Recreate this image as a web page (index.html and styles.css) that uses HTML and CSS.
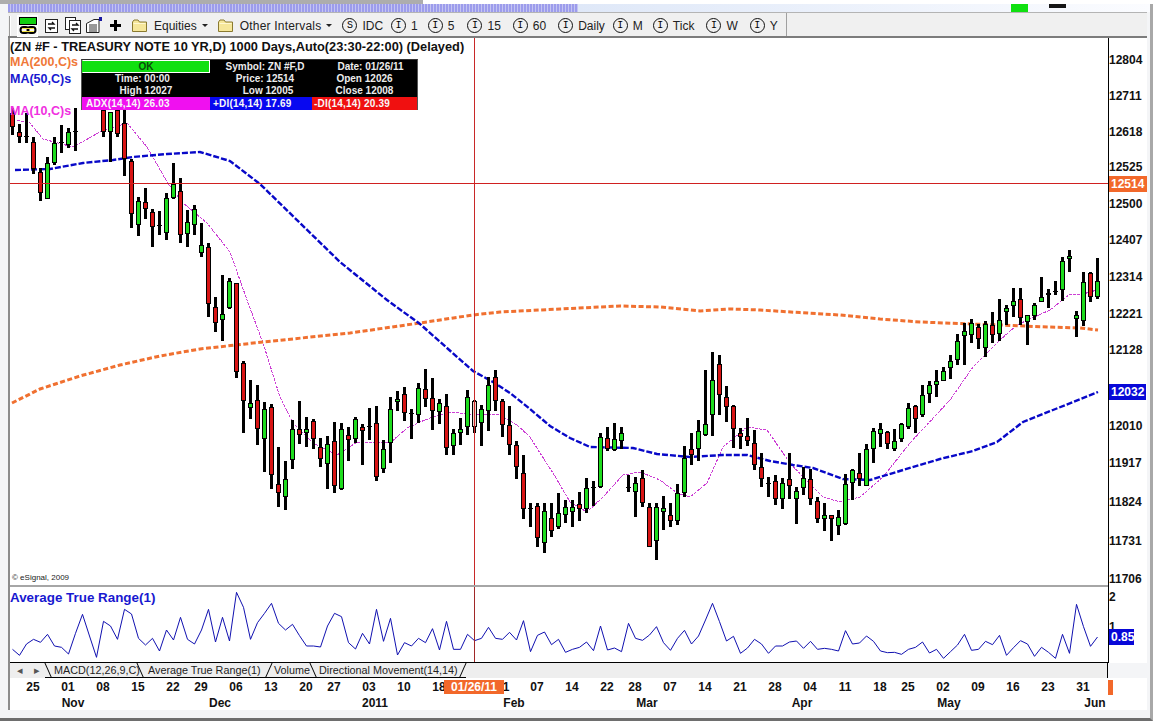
FILE: index.html
```html
<!DOCTYPE html>
<html lang="en">
<head>
<meta charset="utf-8">
<title>ZN #F chart</title>
<link rel="stylesheet" href="styles.css">
<script src="script.js" defer></script>
</head>
<body>
<div class="strip"><div class="strip-gray"></div></div>
<div class="window">
  <div class="titlebar">
    <div class="stripes"></div>
    <div class="led-green"></div>
    <div class="led-black"></div>
  </div>
  <div class="toolbar">
    <div class="grip"></div>
    <div class="btn-pressed">
      <svg class="ico-link" viewBox="0 0 18 18"><rect x="0.5" y="0.5" width="17" height="7" fill="#10d010" stroke="#000"/><rect x="1.5" y="10" width="8" height="6" rx="3" fill="none" stroke="#000" stroke-width="2"/><rect x="8.5" y="10" width="8" height="6" rx="3" fill="none" stroke="#000" stroke-width="2"/><rect x="3" y="11" width="12" height="1" fill="#f0e040"/><rect x="3" y="14" width="12" height="1" fill="#f0e040"/></svg>
    </div>
    <svg class="ico ico-a" viewBox="0 0 13 16"><rect x="0.5" y="1.5" width="12" height="13" fill="#fff" stroke="#222"/><path d="M3 6h6l-2-2M10 10H4l2 2" fill="none" stroke="#111" stroke-width="1.3"/></svg>
    <svg class="ico ico-b" viewBox="0 0 16 17"><rect x="0.5" y="0.5" width="10" height="12" fill="#fff" stroke="#222"/><rect x="4.5" y="3.5" width="11" height="13" fill="#fff" stroke="#222"/><path d="M7 8h6l-2-2M13 12H7l2 2" fill="none" stroke="#111" stroke-width="1.3"/></svg>
    <svg class="ico ico-c" viewBox="0 0 17 17"><path d="M0.5 6.5L8 2.5H13V15.5H0.5Z" fill="#fff" stroke="#222"/><path d="M3 8h8M3 10h8M3 12h8M3 14h8" stroke="#333"/><rect x="13" y="0" width="3" height="4" fill="#1818a0"/></svg>
    <svg class="ico ico-plus" viewBox="0 0 11 11"><path d="M5.5 0V11M0 5.5H11" stroke="#000" stroke-width="3"/></svg>
    <div class="tool menu">
      <svg class="folder" viewBox="0 0 15 13"><path d="M0.5 3L2 1H6L7.5 3H14.5V12.5H0.5Z" fill="#f6e79a" stroke="#8a7a30"/><path d="M1.5 4.5H13.5" stroke="#fff8d0"/></svg>
      <span class="label">Equities</span><span class="caret"></span>
    </div>
    <div class="tool menu menu-last">
      <svg class="folder" viewBox="0 0 15 13"><path d="M0.5 3L2 1H6L7.5 3H14.5V12.5H0.5Z" fill="#f6e79a" stroke="#8a7a30"/><path d="M1.5 4.5H13.5" stroke="#fff8d0"/></svg>
      <span class="label label-wide">Other Intervals</span><span class="caret"></span>
    </div>
    <div class="tool tool-tight"><span class="round">S</span><span class="label">IDC</span></div>
    <div class="tool"><span class="round">I</span><span class="label">1</span></div>
    <div class="tool tool-wider"><span class="round">I</span><span class="label">5</span></div>
    <div class="tool tool-wide"><span class="round">I</span><span class="label">15</span></div>
    <div class="tool tool-wide"><span class="round">I</span><span class="label">60</span></div>
    <div class="tool tool-tight"><span class="round">I</span><span class="label">Daily</span></div>
    <div class="tool"><span class="round">I</span><span class="label">M</span></div>
    <div class="tool tool-wide"><span class="round">I</span><span class="label">Tick</span></div>
    <div class="tool tool-wide"><span class="round">I</span><span class="label">W</span></div>
    <div class="tool"><span class="round">I</span><span class="label">Y</span></div>
    <div class="toolbar-end"></div>
  </div>
  <div class="pane pane-main">
    <div class="plot">
      <svg id="price" class="chart" viewBox="10 38 1098 547" width="1098" height="547"></svg>
      <div class="chart-title">(ZN #F - TREASURY NOTE 10 YR,D) 1000 Days,Auto(23:30-22:00) (Delayed)</div>
      <div class="legend legend-200">MA(200,C)s</div>
      <div class="legend legend-50">MA(50,C)s</div>
      <div class="legend legend-10">MA(10,C)s</div>
      <div class="databox">
        <div class="cell ok">OK</div><div class="cell c2">Symbol: ZN #F,D</div><div class="cell c3 c3-date">Date: 01/26/11</div>
        <div class="cell c1-time">Time: 00:00</div><div class="cell c2">Price: 12514</div><div class="cell c3">Open 12026</div>
        <div class="cell">High 12027</div><div class="cell c2 c2-low">Low 12005</div><div class="cell c3">Close 12008</div>
        <div class="cell adx">ADX(14,14) 26.03</div><div class="cell pdi">+DI(14,14) 17.69</div><div class="cell mdi">-DI(14,14) 20.39</div>
      </div>
      <div class="copyright">© eSignal, 2009</div>
    </div>
    <div class="axis" id="priceAxis"></div>
  </div>
  <div class="pane pane-atr">
    <div class="plot">
      <svg id="atr" class="chart" viewBox="10 587 1098 75" width="1098" height="75"></svg>
      <div class="atr-title">Average True Range(1)</div>
    </div>
    <div class="axis" id="atrAxis"></div>
  </div>
  <div class="tabs">
    <span class="nav">◂</span><span class="nav">▸</span>
    <div class="tab tab-macd">MACD(12,26,9,C)</div>
    <div class="tab tab-atr">Average True Range(1)</div>
    <div class="tab tab-vol">Volume</div>
    <div class="tab tab-dm">Directional Movement(14,14)</div>
  </div>
  <div class="dates" id="dates"><div class="date-end"></div></div>
</div>
</body>
</html>
```
FILE: styles.css
```css
* { box-sizing: border-box; }
html, body { margin: 0; padding: 0; }
body {
  width: 1158px;
  height: 721px;
  overflow: hidden;
  background: #fff;
  font-family: "Liberation Sans", Arial, sans-serif;
  color: #111;
}
.strip { height: 4px; }
.strip-gray { width: 423px; height: 4px; background: #adadad; }

.window {
  width: 1153px;
  height: 717px;
  padding: 0 3px 3px 8px;
  background: #f4f5f7;
  border-right: 3px solid #a8a8a8;
  border-bottom: 3px solid #6e6e6e;
  display: flex;
  flex-direction: column;
}
.titlebar { height: 8px; display: flex; background: linear-gradient(90deg, #dfe8f8 50%, #fbfcff 100%); margin-right: -3px; }
.stripes {
  width: 570px;
  background: repeating-linear-gradient(90deg, #9c9cec 0, #9c9cec 2px, #c4c4f2 2px, #c4c4f2 3px);
}
.led-green { width: 17px; background: #10e010; margin-left: 433px; }
.led-black { width: 17px; height: 4px; background: #161616; margin-left: 21px; }

.toolbar {
  height: 26px;
  background: #f0f0f0;
  border-top: 1px solid #b4b4b4;
  border-bottom: 2px solid #7c7c7c;
  display: flex;
  align-items: center;
  padding: 2px 0 0 1px;
  font-size: 12px;
}
.grip { width: 2px; height: 20px; border-left: 1px solid #999; border-right: 1px solid #fff; margin-right: 6px; }
.btn-pressed { width: 21px; height: 22px; background: #f8f8f8; border: 1px solid #fff; display: flex; align-items: center; justify-content: center; margin-right: 7px; }
.ico-link { width: 18px; height: 18px; }
.ico { flex: none; }
.ico-a { width: 13px; height: 16px; margin-right: 7px; }
.ico-b { width: 16px; height: 17px; margin-right: 5px; }
.ico-c { width: 17px; height: 17px; margin-right: 7px; }
.ico-plus { width: 11px; height: 11px; margin-right: 11px; }
.tool { display: flex; align-items: center; gap: 5px; margin-right: 10px; height: 100%; }
.tool-tight { margin-right: 8px; }
.tool-wide { margin-right: 12px; }
.tool-wider { margin-right: 13px; }
.menu { gap: 7px; margin-right: 10px; }
.menu-last { margin-right: 10px; }
.folder { width: 15px; height: 13px; }
.label { color: #222; white-space: nowrap; }
.label-wide { letter-spacing: 0.2px; }
.caret { width: 0; height: 0; margin-left: -2px; border: 3px solid transparent; border-top: 3px solid #222; border-bottom: 0; }
.round {
  width: 15px; height: 15px;
  border: 1px solid #111; border-radius: 50%;
  font-family: "Liberation Mono", monospace;
  font-size: 10px; line-height: 13px; text-align: center; color: #000;
}
.toolbar-end { flex: 1; height: 100%; margin-top: -2px; height: 23px; border-left: 1px solid #a0a0a0; margin-left: -2px; }

.pane { display: flex; background: #fff; border-left: 2px solid #8c8c8c; }
.pane-main { height: 549px; }
.pane-atr { height: 76px; }
.plot { position: relative; width: 1098px; }
.pane-main .plot { border-bottom: 2px solid #a6a6a6; }
.pane-atr .plot { border-bottom: 1px solid #000; }
.chart { position: absolute; left: 0; top: 0; display: block; }
.crisp { shape-rendering: crispEdges; }
.axis { position: relative; width: 39px; border-left: 1px solid #000; font-size: 12px; font-weight: 700; }
.axis-label { position: absolute; left: 0; transform: translateY(-50%); line-height: 14px; }
.axis-box { padding: 1px 1px 1px 2px; left: 0; color: #fff; }
.box-orange { background: #f2682a; width: 38px; }
.box-blue { background: #0808d8; width: 37px; }
.box-small { width: 25px; }

.chart-title { position: absolute; left: 0; top: 1px; font-size: 12.8px; font-weight: 700; line-height: 16px; white-space: nowrap; }
.legend { position: absolute; left: 0; font-size: 12.5px; font-weight: 700; line-height: 16px; white-space: nowrap; }
.legend-200 { top: 16px; color: #f07838; }
.legend-50 { top: 33px; color: #1818d0; }
.legend-10 { top: 65px; color: #f030e0; }
.atr-title { position: absolute; left: 0; top: 3px; font-size: 13.4px; font-weight: 700; line-height: 16px; color: #1818d0; }
.copyright { position: absolute; left: 2px; top: 535px; font-size: 8px; line-height: 10px; color: #222; }

.databox {
  position: absolute;
  left: 71px;
  top: 21px;
  width: 337px;
  height: 51px;
  background: #000;
  border: 1px solid #555;
  border-top-color: #333;
  display: grid;
  grid-template-columns: 128px 102px 1fr;
  grid-template-rows: 13px 12px 12px 1fr;
  font-size: 10px;
  font-weight: 700;
  line-height: 12px;
  color: #ececec;
  text-align: center;
}
.cell { white-space: nowrap; }
.c2 { padding-left: 8px; }
.c2-low { padding-left: 14px; }
.c3-date { padding-left: 12px; }
.c1-time { padding-right: 7px; }
.cell:nth-child(2), .cell:nth-child(3) { line-height: 14px; }
.ok { background: #10e010; color: #0a4a0a; border: 1px solid #fff; border-left-color: #10e010; }
.adx, .pdi, .mdi { text-align: left; line-height: 13px; padding-left: 4px; color: #f8f8f8; letter-spacing: 0.2px; }
.adx { background: #f010f0; }
.pdi { background: #0808f0; padding-left: 3px; }
.mdi { background: #f01010; padding-left: 2px; }

.tabs {
  height: 15px;
  width: 1100px;
  background: #eeeeee;
  border-left: 2px solid #8c8c8c;
  border-right: 1px solid #000;
  display: flex;
  font-size: 10.8px;
  line-height: 14px;
  color: #222;
}
.nav { width: 17px; text-align: center; font-size: 11px; color: #555; }
.nav:first-child { margin-left: 1px; }
.tab { position: relative; height: 15px; border-bottom: 1px solid #000; white-space: nowrap; }
.tab::before, .tab::after { content: ""; position: absolute; top: 0; width: 1px; height: 16px; background: #000; }
.tab-macd { width: 92px; padding-left: 9px; }
.tab-macd::before { left: 3px; transform: skewX(24deg); }
.tab-macd::after { display: none; }
.tab-atr { width: 135px; padding-left: 11px; }
.tab-atr::before { left: 3px; transform: skewX(24deg); }
.tab-atr::after { right: 3px; transform: skewX(-24deg); }
.tab-vol { width: 45px; padding-left: 2px; }
.tab-vol::before { display: none; }
.tab-vol::after { right: 3px; transform: skewX(24deg); }
.tab-dm { width: 149px; padding-left: 2px; }
.tab-dm::before { display: none; }
.tab-dm::after { right: 3px; transform: skewX(-24deg); }

.dates {
  position: relative;
  height: 32px;
  background: #fff;
  border-left: 2px solid #8c8c8c;
  font-size: 12px;
  font-weight: 700;
  color: #111;
}
.date-label, .month-label { position: absolute; transform: translateX(-50%); line-height: 14px; white-space: nowrap; }
.date-label { top: 2px; }
.month-label { top: 18px; }
.date-cursor { position: absolute; left: 434px; top: 2px; width: 60px; height: 14px; background: #f2682a; color: #fff; text-align: center; line-height: 14px; }
.date-end { position: absolute; left: 1098px; top: 2px; width: 5px; height: 15px; background: #f2682a; }
```
FILE: script.js
```javascript
var SVGNS = "http://www.w3.org/2000/svg";

// high, low, body top, body bottom, colour (r red, g green, k doji, p cursor bar); null = hidden behind the data box
var bars = [
[108,135,113,127,"r"],[124,143,132,137,"r"],[113,143,136,136,"k"],[137,174,142,169,"r"],[168,201,172,193,"r"],
[157,199,163,199,"g"],[137,165,143,163,"g"],[125,153,142,142,"k"],[128,148,132,145,"g"],[108,151,131,131,"k"],
null,null,null,[110,137,110,132,"r"],[112,162,112,132,"g"],[110,137,110,134,"r"],[110,176,123,159,"r"],
[159,228,161,214,"r"],[197,236,201,225,"g"],[188,219,202,209,"r"],[209,247,212,227,"r"],[211,235,225,225,"k"],
[193,240,198,233,"g"],[163,199,184,198,"g"],[178,243,191,235,"r"],[210,247,222,234,"g"],[205,235,209,225,"g"],
[223,257,245,253,"g"],[243,317,247,304,"r"],[297,332,307,323,"r"],[275,341,314,320,"g"],[278,309,281,308,"g"],
[283,378,283,372,"r"],[361,433,363,401,"r"],[380,419,403,408,"g"],[385,445,400,429,"r"],[402,472,409,439,"g"],
[404,489,407,475,"r"],[447,507,484,493,"r"],[461,510,479,497,"g"],[420,469,429,460,"g"],[401,444,429,435,"r"],
[417,447,429,433,"g"],[419,449,421,439,"r"],[438,467,447,459,"r"],[436,489,444,464,"g"],[422,493,441,486,"r"],
[423,490,429,489,"g"],[427,461,435,440,"r"],[417,443,419,439,"g"],[424,465,427,431,"r"],[408,440,426,426,"k"],
[406,481,423,477,"r"],[440,473,449,469,"g"],[397,463,409,443,"g"],[391,411,399,402,"g"],[387,421,394,413,"r"],
[409,439,413,413,"k"],[383,423,388,415,"g"],[369,407,389,399,"r"],[378,430,398,411,"r"],[399,424,403,412,"g"],
[394,455,406,448,"r"],[429,455,433,446,"g"],[418,445,429,433,"g"],[390,435,397,427,"g"],[400,433,401,427,"p"],
[405,446,409,423,"g"],[377,431,385,411,"g"],[370,411,377,401,"r"],[399,437,401,425,"r"],[406,455,425,445,"r"],
[441,479,445,467,"r"],[455,519,473,509,"r"],[503,527,508,508,"k"],[503,547,506,538,"r"],[503,553,511,543,"g"],
[503,537,518,531,"r"],[493,529,513,527,"g"],[500,523,507,515,"g"],[500,527,507,512,"g"],[492,521,504,509,"r"],
[478,513,488,509,"g"],[481,506,487,487,"k"],[433,488,437,487,"g"],[427,451,438,449,"r"],[423,451,439,450,"g"],
[427,449,433,441,"g"],[475,492,487,487,"k"],[477,517,483,492,"g"],[470,507,478,503,"r"],[503,547,507,547,"r"],
[503,560,507,541,"g"],[496,530,508,512,"g"],[503,527,515,521,"r"],[484,525,493,521,"g"],[446,497,458,493,"g"],
[433,465,449,455,"r"],[420,461,431,449,"g"],[370,436,424,435,"g"],[352,436,380,415,"g"],[355,415,364,395,"r"],
[386,422,397,407,"r"],[405,448,406,429,"r"],[428,449,433,437,"r"],[418,446,436,441,"r"],[430,470,443,465,"r"],
[453,487,467,479,"r"],[477,497,483,483,"k"],[475,505,481,499,"r"],[478,509,483,499,"g"],[453,499,479,486,"r"],
[487,524,491,499,"g"],[467,495,478,488,"g"],[469,505,479,499,"r"],[497,523,501,519,"r"],[503,531,515,519,"g"],
[515,541,515,519,"r"],[510,535,517,526,"g"],[474,525,484,524,"g"],[469,500,470,483,"g"],[453,486,473,479,"r"],
[444,486,449,486,"g"],[428,463,431,449,"g"],[423,447,429,434,"g"],[431,449,432,444,"r"],[429,451,441,449,"g"],
[423,442,424,439,"g"],[403,429,408,427,"g"],[405,433,406,419,"r"],[385,417,395,415,"g"],[381,403,385,394,"g"],
[370,397,381,385,"g"],[367,381,371,381,"g"],[355,379,361,368,"g"],[334,365,341,360,"g"],[323,365,331,336,"g"],
[319,343,323,335,"g"],[324,349,327,339,"r"],[321,357,324,348,"g"],[312,343,325,335,"r"],[299,341,320,334,"g"],
[305,325,308,312,"g"],[288,317,301,306,"g"],[288,325,299,318,"r"],[315,345,315,322,"g"],[303,320,305,316,"g"],
[277,302,297,302,"g"],[289,308,293,295,"g"],[281,295,291,291,"k"],[257,301,261,290,"g"],[250,272,256,259,"g"],
[311,337,315,319,"g"],[272,326,282,321,"g"],[272,302,273,297,"r"],[258,299,281,297,"g"]
];
var fills = { r: "#d81414", g: "#1edc1e", p: "#f2d0c8" };

var ma200 = [[12,403],[40,389],[80,376],[120,365],[160,356],[200,349],[263,342],[350,333],[420,323],[473,315],[500,312],[560,309],[620,306],[660,307],[700,311],[730,309],[760,310],[800,312.6],[840,315],[880,319],[920,322],[960,323.6],[1000,325],[1040,326.7],[1080,328],[1098,330]];
var ma50 = [[15,170],[50,169],[83,163],[113,160],[133,157],[167,154],[200,152],[230,161],[260,184],[300,223],[340,262],[387,300],[420,324],[447,348],[473,371],[493,382],[510,393],[530,409],[550,426],[570,438],[590,447],[633,448],[657,454],[690,457],[723,455],[747,455],[770,461],[793,465],[813,468],[843,479],[870,480],[903,470],[940,459],[973,451],[997,442],[1023,422],[1053,410],[1098,392]];
var ma10 = [[17,120],[30,123],[43,139],[73,147],[100,132],[127,123],[147,147],[167,182],[183,203],[207,223],[230,252],[247,300],[263,343],[280,397],[293,423],[313,443],[337,455],[357,442],[373,442],[390,443],[407,428],[420,422],[433,417],[450,412],[467,414],[487,414],[500,415],[517,425],[530,437],[540,453],[553,473],[570,502],[587,512],[603,497],[623,475],[640,472],[660,480],[677,493],[690,497],[707,483],[723,447],[747,427],[767,430],[790,463],[803,477],[823,497],[840,502],[860,497],[883,477],[910,443],[950,400],[973,367],[1000,340],[1017,325],[1050,310],[1070,294],[1083,294],[1097,290]];

var atrA = [238,256,222,208,217,193,228,232,252,190,133,198,262,154,168,208,118,132,205,225,205,243,180,210,142,208,222,180,118,216,142,213,67,112,208,158,130,100,160,180,163,197,228,228,231,168,130,140,218,237,190,222,118,214,145,255,218,228,205,218,176,240,154,238,238,193,212,205,172,205,208,187,210,152,245,196,186,224,208,
247,238,232,216,242,168,240,234,245,160,205,211,195,170,218,241,205,181,222,198,150,100,155,213,199,250,234,208,222,250,228,228,216,213,235,214,238,235,238,243,182,222,219,198,214,243,248,247,253,238,232,216,249,238,265,245,225,193,241,238,214,224,196,256,233,212,222,259,232,247,265,193,250,103,170,229,201];

var priceTicks = [["12804",59],["12711",95],["12618",131],["12525",166],["12500",203],["12407",239],["12314",276],["12221",313],["12128",349],["12010",425],["11917",462],["11824",501],["11731",540],["11706",578]];
var dateTicks = [["25",33],["01",68],["08",103],["15",138],["22",173],["29",201],["06",236],["13",271],["20",306],["27",334],["03",369],["10",404],["18",439],["1",506],["07",537],["14",572],["22",607],["28",635],["07",670],["14",705],["21",740],["28",775],["04",810],["11",845],["18",880],["25",908],["02",943],["09",978],["16",1013],["23",1048],["31",1083]];
var monthTicks = [["Nov",73],["Dec",220],["2011",375],["Feb",514],["Mar",647],["Apr",802],["May",949],["Jun",1095]];

function el(name, attrs, parent) {
  var node = document.createElementNS(SVGNS, name);
  for (var k in attrs) node.setAttribute(k, attrs[k]);
  parent.appendChild(node);
  return node;
}
function line(points, attrs, parent) {
  attrs.points = points.map(function (p) { return p.join(","); }).join(" ");
  attrs.fill = "none";
  el("polyline", attrs, parent);
}
function rect(x, y, w, h, fill, parent) {
  el("rect", { x: x, y: y, width: w, height: h, fill: fill }, parent);
}
function label(parent, cls, text, style) {
  var d = document.createElement("div");
  d.className = cls;
  d.textContent = text;
  for (var k in style) d.style[k] = style[k];
  parent.appendChild(d);
}

var price = document.getElementById("price");
line(ma10, { stroke: "#cc40d4", "stroke-width": 1, "stroke-dasharray": "3 1", "class": "crisp" }, price);
line(ma200, { stroke: "#f07030", "stroke-width": 3, "stroke-dasharray": "5 2.5" }, price);
line(ma50, { stroke: "#0808c8", "stroke-width": 2.4, "stroke-dasharray": "6 2" }, price);
bars.forEach(function (b, i) {
  if (!b) return;
  var x = 12 + 7 * i;
  rect(x - 1, b[0], 3, b[1] - b[0], "#000", price);
  rect(x - 2, b[2], 5, Math.max(b[3] - b[2], 1), "#000", price);
  if (b[3] - b[2] > 2) rect(x - 1, b[2] + 1, 3, b[3] - b[2] - 2, fills[b[4]], price);
});
rect(474, 38, 1, 547, "#c82828", price);
rect(10, 183, 1098, 1, "#d02020", price);

var atr = document.getElementById("atr");
line(atrA.map(function (v, i) { return [12.5 + 7 * i, 570 + v / 3]; }), { stroke: "#1010b0", "stroke-width": 1 }, atr);
rect(474, 587, 1, 75, "#a02828", atr);

var axis = document.getElementById("priceAxis");
priceTicks.forEach(function (t) { label(axis, "axis-label", t[0], { top: (t[1] - 37) + "px" }); });
label(axis, "axis-label axis-box box-orange", "12514", { top: (183.5 - 38) + "px" });
label(axis, "axis-label axis-box box-blue", "12032", { top: (392 - 38) + "px" });

var atrAxis = document.getElementById("atrAxis");
label(atrAxis, "axis-label", "2", { top: "10px" });
label(atrAxis, "axis-label", "1", { top: "40px" });
label(atrAxis, "axis-label axis-box box-blue box-small", "0.85", { top: "50px" });

var dates = document.getElementById("dates");
dateTicks.forEach(function (t) { label(dates, "date-label", t[0], { left: (t[1] - 10) + "px" }); });
monthTicks.forEach(function (t) { label(dates, "month-label", t[0], { left: (t[1] - 10) + "px" }); });
label(dates, "date-cursor", "01/26/11", {});
```
